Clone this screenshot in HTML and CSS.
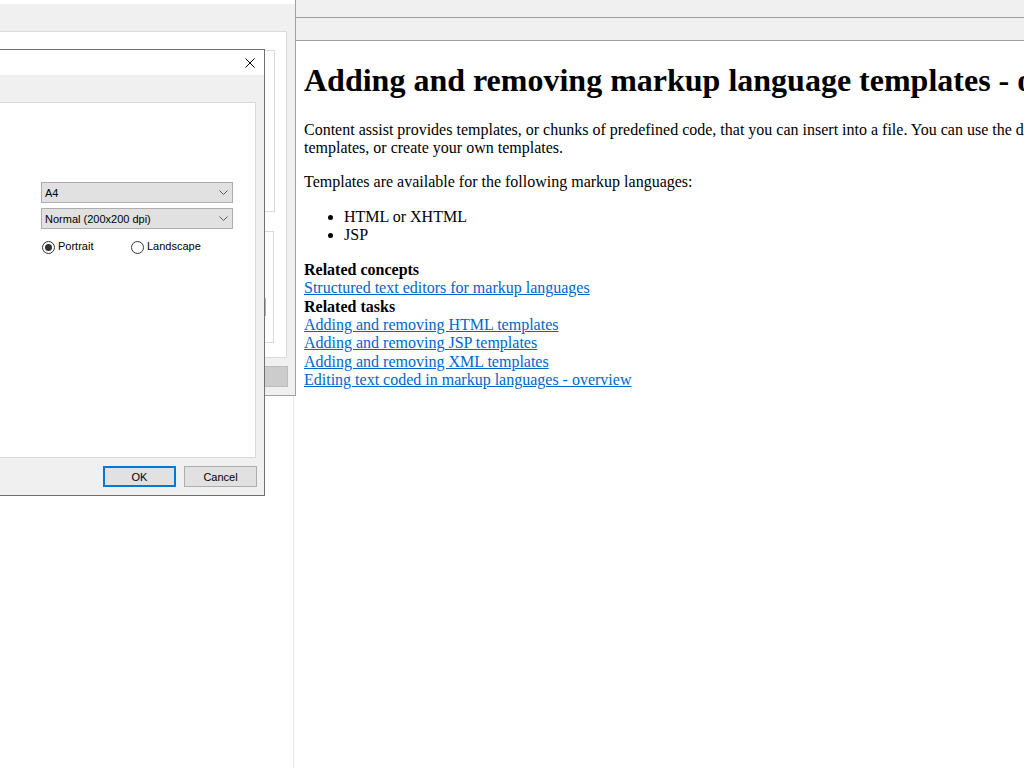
FILE: index.html
```html
<!DOCTYPE html>
<html lang="en">
<head>
<meta charset="utf-8">
<title>Adding and removing markup language templates - overview</title>
<link rel="stylesheet" href="styles.css">
</head>
<body>
<div class="app">
  <aside class="nav"></aside>
  <main class="viewer">
    <div class="bar bar-top"></div>
    <div class="bar bar-tools"></div>
    <div class="doc-frame">
      <article class="doc">
        <h1>Adding and removing markup language templates - overview</h1>
        <p>Content assist provides templates, or chunks of predefined code, that you can insert into a file. You can use the default templates, or create your own templates.</p>
        <p>Templates are available for the following markup languages:</p>
        <ul>
          <li>HTML or XHTML</li>
          <li>JSP</li>
        </ul>
        <div class="linklist">
          <strong>Related concepts</strong>
          <a href="#">Structured text editors for markup languages</a>
        </div>
        <div class="linklist">
          <strong>Related tasks</strong>
          <a href="#">Adding and removing HTML templates</a>
          <a href="#">Adding and removing JSP templates</a>
          <a href="#">Adding and removing XML templates</a>
          <a href="#">Editing text coded in markup languages - overview</a>
        </div>
      </article>
    </div>
  </main>
</div>

<div class="win win-back">
  <div class="title"></div>
  <div class="body">
    <div class="back-panel">
      <div class="group group-a"></div>
      <div class="group group-b"><span class="thumb"></span></div>
    </div>
    <div class="back-btn"></div>
  </div>
</div>

<div class="win win-front">
  <div class="title">
    <svg class="close" width="10" height="10" viewBox="0 0 10 10" aria-label="Close">
      <path d="M0.5 0.5 L9.5 9.5 M9.5 0.5 L0.5 9.5" stroke="#000" stroke-width="1" fill="none"/>
    </svg>
  </div>
  <div class="body">
    <div class="panel">
      <div class="combo"><span>A4</span>
        <svg class="chev" width="9" height="5" viewBox="0 0 9 5"><path d="M0.5 0.5 L4.5 4.5 L8.5 0.5" stroke="#5a5a5a" fill="none"/></svg>
      </div>
      <div class="combo"><span>Normal (200x200 dpi)</span>
        <svg class="chev" width="9" height="5" viewBox="0 0 9 5"><path d="M0.5 0.5 L4.5 4.5 L8.5 0.5" stroke="#5a5a5a" fill="none"/></svg>
      </div>
      <div class="radios">
        <label class="radio radio-first"><span class="dot checked"></span><span class="rlabel">Portrait</span></label>
        <label class="radio"><span class="dot"></span><span class="rlabel">Landscape</span></label>
      </div>
    </div>
    <div class="buttons">
      <button class="btn btn-default">OK</button>
      <button class="btn">Cancel</button>
    </div>
  </div>
</div>
</body>
</html>
```

FILE: styles.css
```css
html, body {
  margin: 0;
  height: 100%;
}
body {
  overflow: hidden;
  background: #fff;
  font-family: "Liberation Serif", "Times New Roman", serif;
  position: relative;
}
.app {
  display: flex;
  height: 768px;
}
.nav {
  width: 293px;
  flex: none;
  border-right: 1px solid #e8e8e8;
}
.viewer {
  flex: 1;
  min-width: 0;
  display: flex;
  flex-direction: column;
  overflow: hidden;
}
.bar {
  flex: none;
  background: #f0f0f0;
  border-bottom: 1px solid #a0a0a0;
}
.bar-top { height: 17px; }
.bar-tools { height: 22px; }
.doc-frame {
  flex: 1;
  overflow: hidden;
  padding: 0 10px;
}
.doc {
  width: 790px;
  display: flow-root;
  font-size: 16px;
  line-height: 18.4px;
  color: #000;
}
.doc h1 {
  font-size: 32px;
  line-height: 36.8px;
  font-weight: bold;
  margin: 21.44px 0;
  white-space: nowrap;
}
.doc p { margin: 16px 0; }
.doc ul { margin: 16px 0; padding-left: 40px; }
.linklist strong,
.linklist a { display: block; }
.linklist a { color: #0066cc; }

/* windows on the desktop */
.win {
  position: absolute;
  box-sizing: border-box;
  background: #f0f0f0;
  display: flex;
  flex-direction: column;
  font-family: "Liberation Sans", Arial, sans-serif;
  font-size: 11px;
  color: #000;
}
.win .title {
  flex: none;
  background: #fff;
}
.win .body {
  flex: 1;
  display: flex;
  flex-direction: column;
}

.win-back {
  left: -20px;
  top: -30px;
  width: 316px;
  height: 426px;
  border: 1px solid #a0a0a0;
  z-index: 5;
}
.win-back .title { height: 33px; }
.win-back .body { padding: 27px 8px 0 0; }
.back-panel {
  height: 327px;
  box-sizing: border-box;
  background: #fff;
  border: 1px solid #dadada;
  padding: 18px 11px 0 0;
  display: flex;
  flex-direction: column;
  gap: 19px;
}
.group {
  box-sizing: border-box;
  border: 1px solid #dadada;
  position: relative;
}
.group-a { height: 162px; }
.group-b { height: 112px; margin-right: 1px; }
.thumb {
  position: absolute;
  right: 7px;
  top: 66px;
  width: 2px;
  height: 18px;
  background: #b4b4b4;
}
.back-btn {
  align-self: flex-end;
  margin: 8px -1px 0 0;
  width: 120px;
  height: 21px;
  box-sizing: border-box;
  background: #cccccc;
  border: 1px solid #bcbcbc;
}

.win-front {
  left: -40px;
  top: 49px;
  width: 305px;
  height: 447px;
  border: 1px solid #707070;
  z-index: 6;
}
.win-front .title {
  height: 25px;
  display: flex;
  align-items: center;
  justify-content: flex-end;
}
.close { margin-right: 9px; display: block; }
.win-front .body { padding: 27px 8px 0 8px; }
.panel {
  height: 356px;
  box-sizing: border-box;
  background: #fff;
  border: 1px solid #dadada;
  padding: 79px 0 0 71px;
  display: flex;
  flex-direction: column;
  gap: 5px;
}
.combo {
  width: 192px;
  height: 21px;
  box-sizing: border-box;
  background: #e1e1e1;
  border: 1px solid #adadad;
  display: flex;
  align-items: center;
  justify-content: space-between;
  padding: 0 4px 0 3px;
}
.chev { display: block; }
.radios {
  display: flex;
  align-items: center;
  margin-top: 7px;
  padding-left: 1px;
  height: 13px;
}
.radio {
  display: flex;
  align-items: center;
  gap: 3px;
}
.rlabel { line-height: 13px; position: relative; top: -1px; }
.radio-first { width: 89px; }
.dot {
  width: 13px;
  height: 13px;
  box-sizing: border-box;
  border: 1px solid #333;
  border-radius: 50%;
  background: #fff;
  display: flex;
  align-items: center;
  justify-content: center;
}
.dot.checked::after {
  content: "";
  width: 7px;
  height: 7px;
  border-radius: 50%;
  background: #333;
}
.buttons {
  display: flex;
  justify-content: flex-end;
  gap: 8px;
  margin: 8px -1px 0 0;
}
.btn {
  width: 73px;
  height: 21px;
  box-sizing: border-box;
  background: #e1e1e1;
  border: 1px solid #adadad;
  font-family: "Liberation Sans", Arial, sans-serif;
  font-size: 11px;
  color: #000;
  padding: 0;
}
.btn-default { border: 2px solid #0078d7; }
```
